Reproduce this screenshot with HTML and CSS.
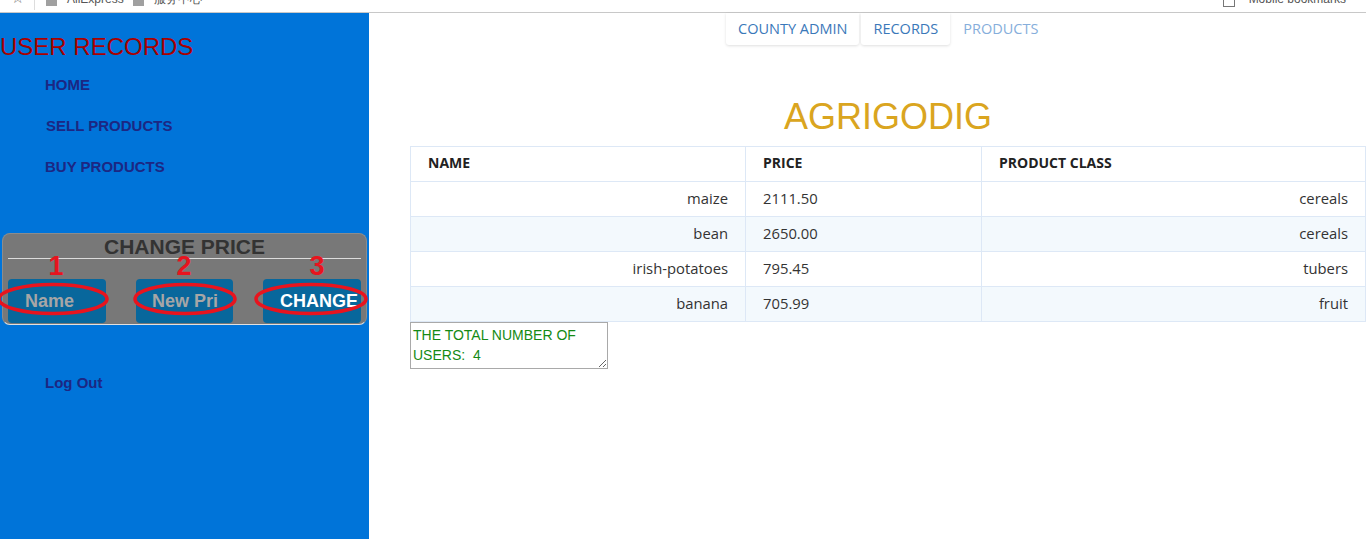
FILE: index.html
```html
<!DOCTYPE html>
<html>
<head>
<meta charset="utf-8">
<title>User Records</title>
<link rel="stylesheet" href="styles.css">
</head>
<body>
<div class="topbar">
  <div class="bm-left">
    <span class="star">☆</span>
    <span class="sep"></span>
    <span class="folder"></span><span class="bm-text">AliExpress</span>
    <span class="folder f2"></span><span class="bm-text">服务中心</span>
  </div>
  <div class="bm-right">
    <span class="mobile"></span><span class="bm-text">Mobile bookmarks</span>
  </div>
</div>
<div class="page">
  <aside class="sidebar">
    <h2 class="side-title">USER RECORDS</h2>
    <ul class="nav">
      <li>HOME</li>
      <li class="nudge">SELL PRODUCTS</li>
      <li>BUY PRODUCTS</li>
    </ul>
    <div class="price-box">
      <div class="price-title">CHANGE PRICE</div>
      <div class="price-rule"></div>
      <div class="price-row">
        <div class="pbtn placeholder">Name</div>
        <div class="pbtn placeholder">New Pri</div>
        <div class="pbtn submit">CHANGE</div>
      </div>
      <svg class="marks" width="365" height="92" viewBox="0 0 365 92">
        <text x="54" y="42" class="num" text-anchor="middle">1</text>
        <text x="182" y="42" class="num" text-anchor="middle">2</text>
        <text x="315" y="42" class="num" text-anchor="middle">3</text>
        <ellipse cx="51" cy="66" rx="54" ry="14.5" />
        <ellipse cx="183" cy="66" rx="50" ry="14.5" />
        <ellipse cx="309" cy="66" rx="55" ry="14.5" />
      </svg>
    </div>
    <div class="logout">Log Out</div>
  </aside>
  <main class="main">
    <nav class="tabs">
      <span class="tab boxed">COUNTY ADMIN</span>
      <span class="tab boxed second">RECORDS</span>
      <span class="tab faded">PRODUCTS</span>
    </nav>
    <h1 class="brand">AGRIGODIG</h1>
    <table class="records">
      <thead>
        <tr><th class="c1">NAME</th><th class="c2">PRICE</th><th class="c3">PRODUCT CLASS</th></tr>
      </thead>
      <tbody>
        <tr><td class="r">maize</td><td>2111.50</td><td class="r">cereals</td></tr>
        <tr class="alt"><td class="r">bean</td><td>2650.00</td><td class="r">cereals</td></tr>
        <tr><td class="r">irish-potatoes</td><td>795.45</td><td class="r">tubers</td></tr>
        <tr class="alt"><td class="r">banana</td><td>705.99</td><td class="r">fruit</td></tr>
      </tbody>
    </table>
    <textarea class="total">THE TOTAL NUMBER OF USERS:  4</textarea>
  </main>
</div>
</body>
</html>
```

FILE: styles.css
```css
html, body {
  margin: 0;
  padding: 0;
  height: 100%;
  overflow: hidden;
  background: #fff;
  font-family: Arial, "Liberation Sans", sans-serif;
}

.topbar {
  height: 12px;
  border-bottom: 1px solid #c8c8c8;
  display: flex;
  justify-content: space-between;
  overflow: hidden;
  background: #fff;
}
.bm-left, .bm-right {
  display: flex;
  align-items: flex-start;
}
.star {
  margin: -10px 0 0 11px;
  font-size: 15px;
  color: #777;
  line-height: 16px;
}
.sep {
  width: 1px;
  height: 10px;
  background: #ddd;
  margin: 0 11px 0 10px;
}
.folder {
  width: 11px;
  height: 6px;
  background: #a0a0a0;
  margin-right: 10px;
}
.folder.f2 { margin-left: 9px; }
.bm-text {
  font-size: 12px;
  line-height: 12px;
  margin-top: -7px;
  color: #555;
}
.bm-right { padding-right: 20px; }
.mobile {
  width: 10px;
  height: 6px;
  border: 1px solid #777;
  border-top: none;
  margin-right: 14px;
}

.page {
  display: flex;
  height: 526px;
}

.sidebar {
  width: 369px;
  flex: none;
  background: #0074d9;
  padding-top: 20px;
  box-sizing: border-box;
}
.side-title {
  margin: 0;
  font-size: 24px;
  line-height: 28px;
  font-weight: normal;
  color: #a80000;
}
.nav {
  list-style: none;
  margin: 3px 0 0 0;
  padding: 0 0 0 45px;
}
.nav li {
  height: 41px;
  line-height: 41px;
  font-size: 15px;
  font-weight: bold;
  color: #1c2783;
}
.nav li.nudge { padding-left: 1px; }

.price-box {
  position: relative;
  margin: 46px 0 0 2px;
  width: 365px;
  height: 92px;
  box-sizing: border-box;
  background: #787878;
  border: 1px solid #8c8c8c;
  border-bottom-color: #e0e0e0;
  border-radius: 8px;
  padding: 0 5px;
}
.price-title {
  text-align: center;
  font-size: 21px;
  font-weight: bold;
  color: #333;
  line-height: 24px;
  padding-top: 1px;
}
.price-rule {
  height: 1px;
  background: #dcdcdc;
  margin-top: -1px;
}
.price-row {
  display: flex;
  justify-content: space-between;
  margin-top: 20px;
}
.pbtn {
  width: 98px;
  height: 44px;
  line-height: 44px;
  background: #08679c;
  border-radius: 4px;
  font-size: 18px;
  font-weight: bold;
  box-sizing: border-box;
}
.pbtn.placeholder {
  color: #a6a6a6;
  padding-left: 17px;
}
.pbtn:nth-child(2) { width: 97px; padding-left: 16px; }
.pbtn.submit {
  color: #fff;
  padding-left: 17px;
}
.marks {
  position: absolute;
  left: -1px;
  top: -1px;
  overflow: visible;
}
.marks ellipse {
  fill: none;
  stroke: #e8141e;
  stroke-width: 3.5;
}
.marks .num {
  font-family: Arial, "Liberation Sans", sans-serif;
  font-size: 27px;
  font-weight: bold;
  fill: #e8141e;
}

.logout {
  margin: 48px 0 0 45px;
  font-size: 15px;
  font-weight: bold;
  color: #1c2783;
  line-height: 20px;
}

.main {
  flex: 1;
  min-width: 0;
}
.tabs {
  display: flex;
  align-items: stretch;
  padding-left: 357px;
  height: 32px;
}
.tab {
  font-family: "Open Sans", "Noto Sans", sans-serif;
  font-size: 14.5px;
  line-height: 32px;
  color: #3a78b9;
  padding: 0 12px;
}
.tab.boxed {
  background: #fff;
  box-shadow: 0 1px 3px rgba(0, 0, 0, 0.13);
  border-radius: 0 0 3px 3px;
}
.tab.second { margin-left: 2px; }
.tab.faded {
  color: #86aedb;
  margin-left: 1px;
}

.brand {
  margin: 52px 0 0 41px;
  text-align: center;
  font-size: 36px;
  line-height: 40px;
  font-weight: normal;
  color: #daa520;
}

.records {
  margin: 9px 0 0 41px;
  width: 956px;
  border-collapse: collapse;
  font-family: "Open Sans", "Noto Sans", sans-serif;
  font-size: 14.8px;
  color: #333;
}
.records th, .records td {
  border: 1px solid #dde8f6;
  height: 35px;
  padding: 0 17px 2px;
  box-sizing: border-box;
  text-align: left;
}
.records th {
  font-weight: bold;
  color: #222;
  font-size: 14px;
  padding-bottom: 3px;
}
.records th.c1 { width: 335px; }
.records th.c2 { width: 236px; }
.records td.r { text-align: right; }
.records tr.alt td { background: #f3f9fd; }

.total {
  display: block;
  margin: 0 0 0 41px;
  width: 198px;
  height: 47px;
  box-sizing: border-box;
  border: 1px solid #a9a9a9;
  padding: 2px 2px;
  font-family: Arial, "Liberation Sans", sans-serif;
  font-size: 14px;
  line-height: 20px;
  color: #148a14;
  resize: both;
  overflow: hidden;
}
```
